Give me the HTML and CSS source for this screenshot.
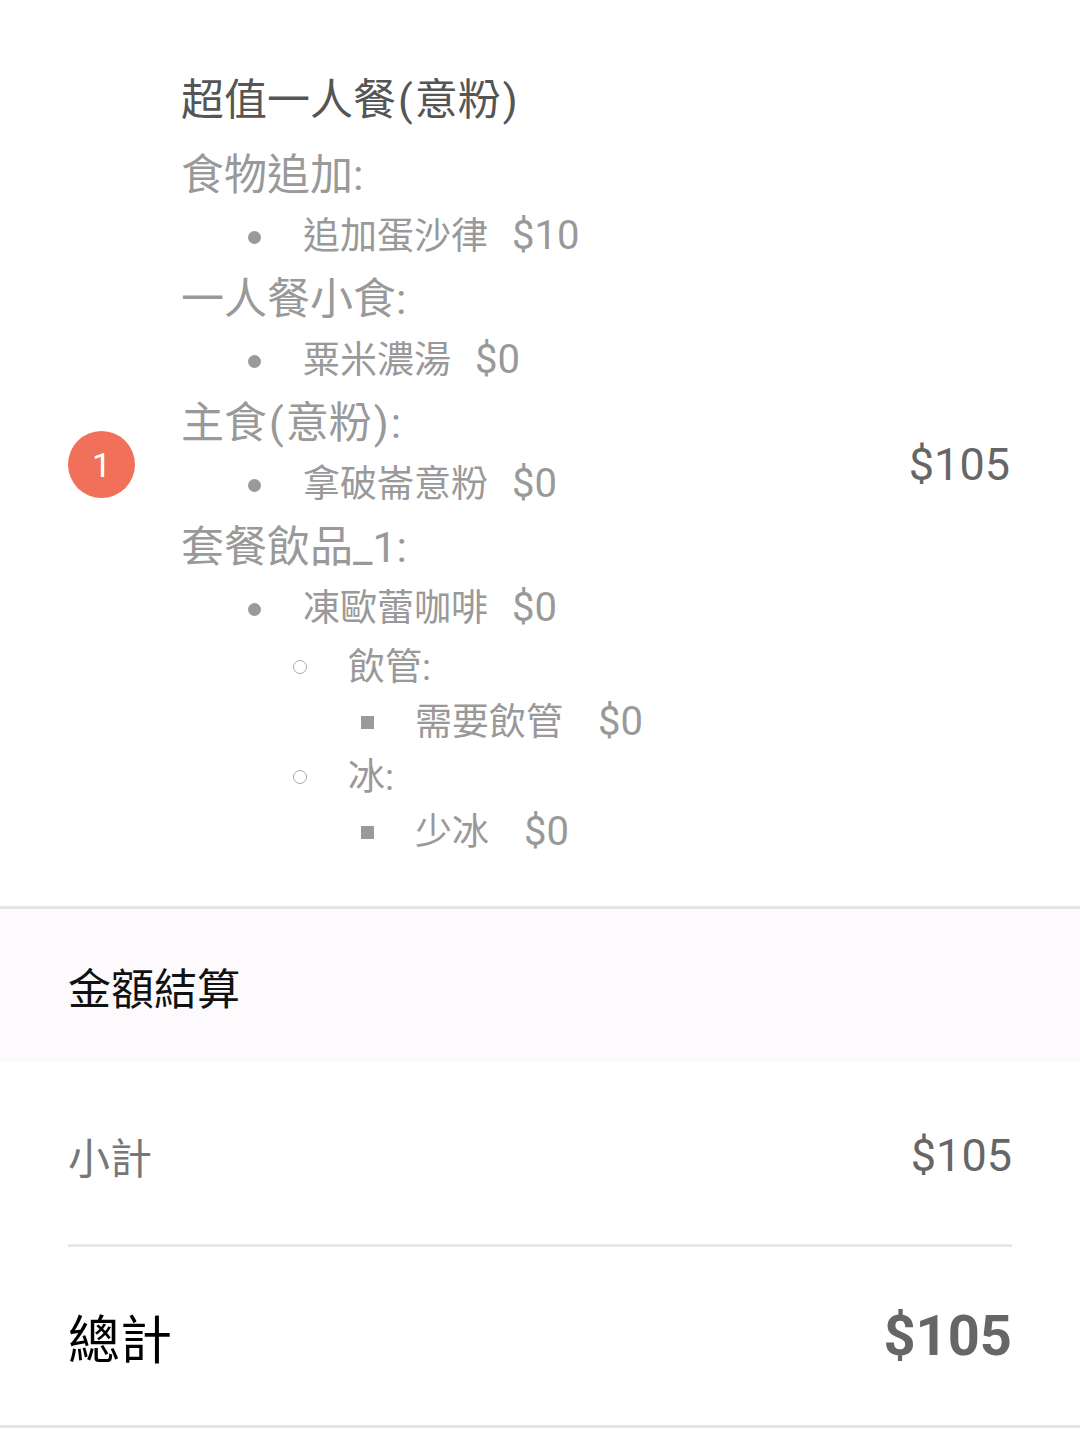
FILE: index.html
```html
<!DOCTYPE html>
<html lang="zh-Hant">
<head>
  <meta charset="UTF-8" />
  <meta name="viewport" content="width=device-width, initial-scale=1.0"/>
  <title>訂單明細</title>
  <link rel="stylesheet" href="styles.css">
</head>
<body>

  <div class="order-item">
    <div class="qty">1</div>

    <div class="details">
      <div class="item-name">超值一人餐<span class="paren">(</span>意粉<span class="paren">)</span></div>

      <div class="group">食物追加:</div>
      <ul class="opts">
        <li>追加蛋沙律<span class="opt-price">$10</span></li>
      </ul>

      <div class="group">一人餐小食:</div>
      <ul class="opts">
        <li>粟米濃湯<span class="opt-price">$0</span></li>
      </ul>

      <div class="group">主食<span class="paren">(</span>意粉<span class="paren">)</span>:</div>
      <ul class="opts">
        <li>拿破崙意粉<span class="opt-price">$0</span></li>
      </ul>

      <div class="group">套餐飲品_1:</div>
      <ul class="opts">
        <li>凍歐蕾咖啡<span class="opt-price">$0</span>
          <ul class="sub">
            <li>飲管:
              <ul class="subsub">
                <li>需要飲管<span class="opt-price wide">$0</span></li>
              </ul>
            </li>
            <li>冰:
              <ul class="subsub">
                <li>少冰<span class="opt-price wide">$0</span></li>
              </ul>
            </li>
          </ul>
        </li>
      </ul>
    </div>

    <div class="price">$105</div>
  </div>

  <div class="summary-head">金額結算</div>

  <div class="summary">
    <div class="row subtotal">
      <span>小計</span>
      <span class="amount">$105</span>
    </div>
    <div class="row total">
      <span>總計</span>
      <span class="amount">$105</span>
    </div>
  </div>

</body>
</html>
```

FILE: styles.css
```css
body {
  margin: 0;
  background: white;
  font-family: Roboto, "Noto Sans CJK TC", sans-serif;
  color: #999;
}

.order-item {
  display: flex;
  align-items: center;
  padding: 69px 70px 46px 68px;
  border-bottom: 3px solid #e6e6e6;
}

.qty {
  width: 67px;
  height: 67px;
  border-radius: 50%;
  background: #f0705a;
  color: white;
  font-size: 34px;
  display: flex;
  justify-content: center;
  align-items: center;
  flex-shrink: 0;
}

.details {
  margin-left: 46px;
  font-size: 43px;
}

.paren {
  margin: 0 2px;
}

.item-name {
  color: #555;
  line-height: 62px;
  margin-bottom: 13px;
}

.group {
  line-height: 62px;
}

.opts,
.sub,
.subsub {
  list-style: none;
  margin: 0;
  padding: 0;
}

.opts > li {
  position: relative;
  padding-left: 122px;
  font-size: 37px;
  line-height: 62px;
}

.opts > li::before {
  content: "";
  position: absolute;
  left: 67px;
  top: 25px;
  width: 13px;
  height: 13px;
  border-radius: 50%;
  background: #9a9a9a;
}

.opt-price {
  font-size: 40px;
  line-height: 1;
  margin-left: 24px;
}

.opt-price.wide {
  margin-left: 35px;
}

.sub > li {
  position: relative;
  margin-left: -122px;
  padding-left: 167px;
  line-height: 55px;
}

.sub > li::before {
  content: "";
  position: absolute;
  left: 112px;
  top: 20px;
  width: 14px;
  height: 14px;
  border-radius: 50%;
  border: 1.5px solid #aaa;
  box-sizing: border-box;
}

.subsub > li {
  position: relative;
  margin-left: -167px;
  padding-left: 234px;
  line-height: 55px;
}

.subsub > li::before {
  content: "";
  position: absolute;
  left: 180px;
  top: 21px;
  width: 13px;
  height: 13px;
  background: #9a9a9a;
}

.price {
  margin-left: auto;
  font-size: 45px;
  color: #666;
}

.summary-head {
  background: #fcfafd;
  height: 153px;
  padding-left: 68px;
  display: flex;
  align-items: center;
  font-size: 43px;
  color: #111;
}

.summary {
  padding: 0 68px 0 68px;
  border-bottom: 3px solid #e6e6e6;
}

.row {
  display: flex;
  justify-content: space-between;
  align-items: center;
}

.subtotal {
  height: 185px;
  padding-top: 4px;
  box-sizing: border-box;
  font-size: 42px;
  color: #777;
  border-bottom: 3px solid #e8e8e8;
}

.subtotal .amount {
  font-size: 45px;
  color: #666;
}

.total {
  height: 178px;
  font-size: 52px;
  color: #000;
}

.total .amount {
  font-size: 56px;
  color: #666;
  font-weight: bold;
}
```
